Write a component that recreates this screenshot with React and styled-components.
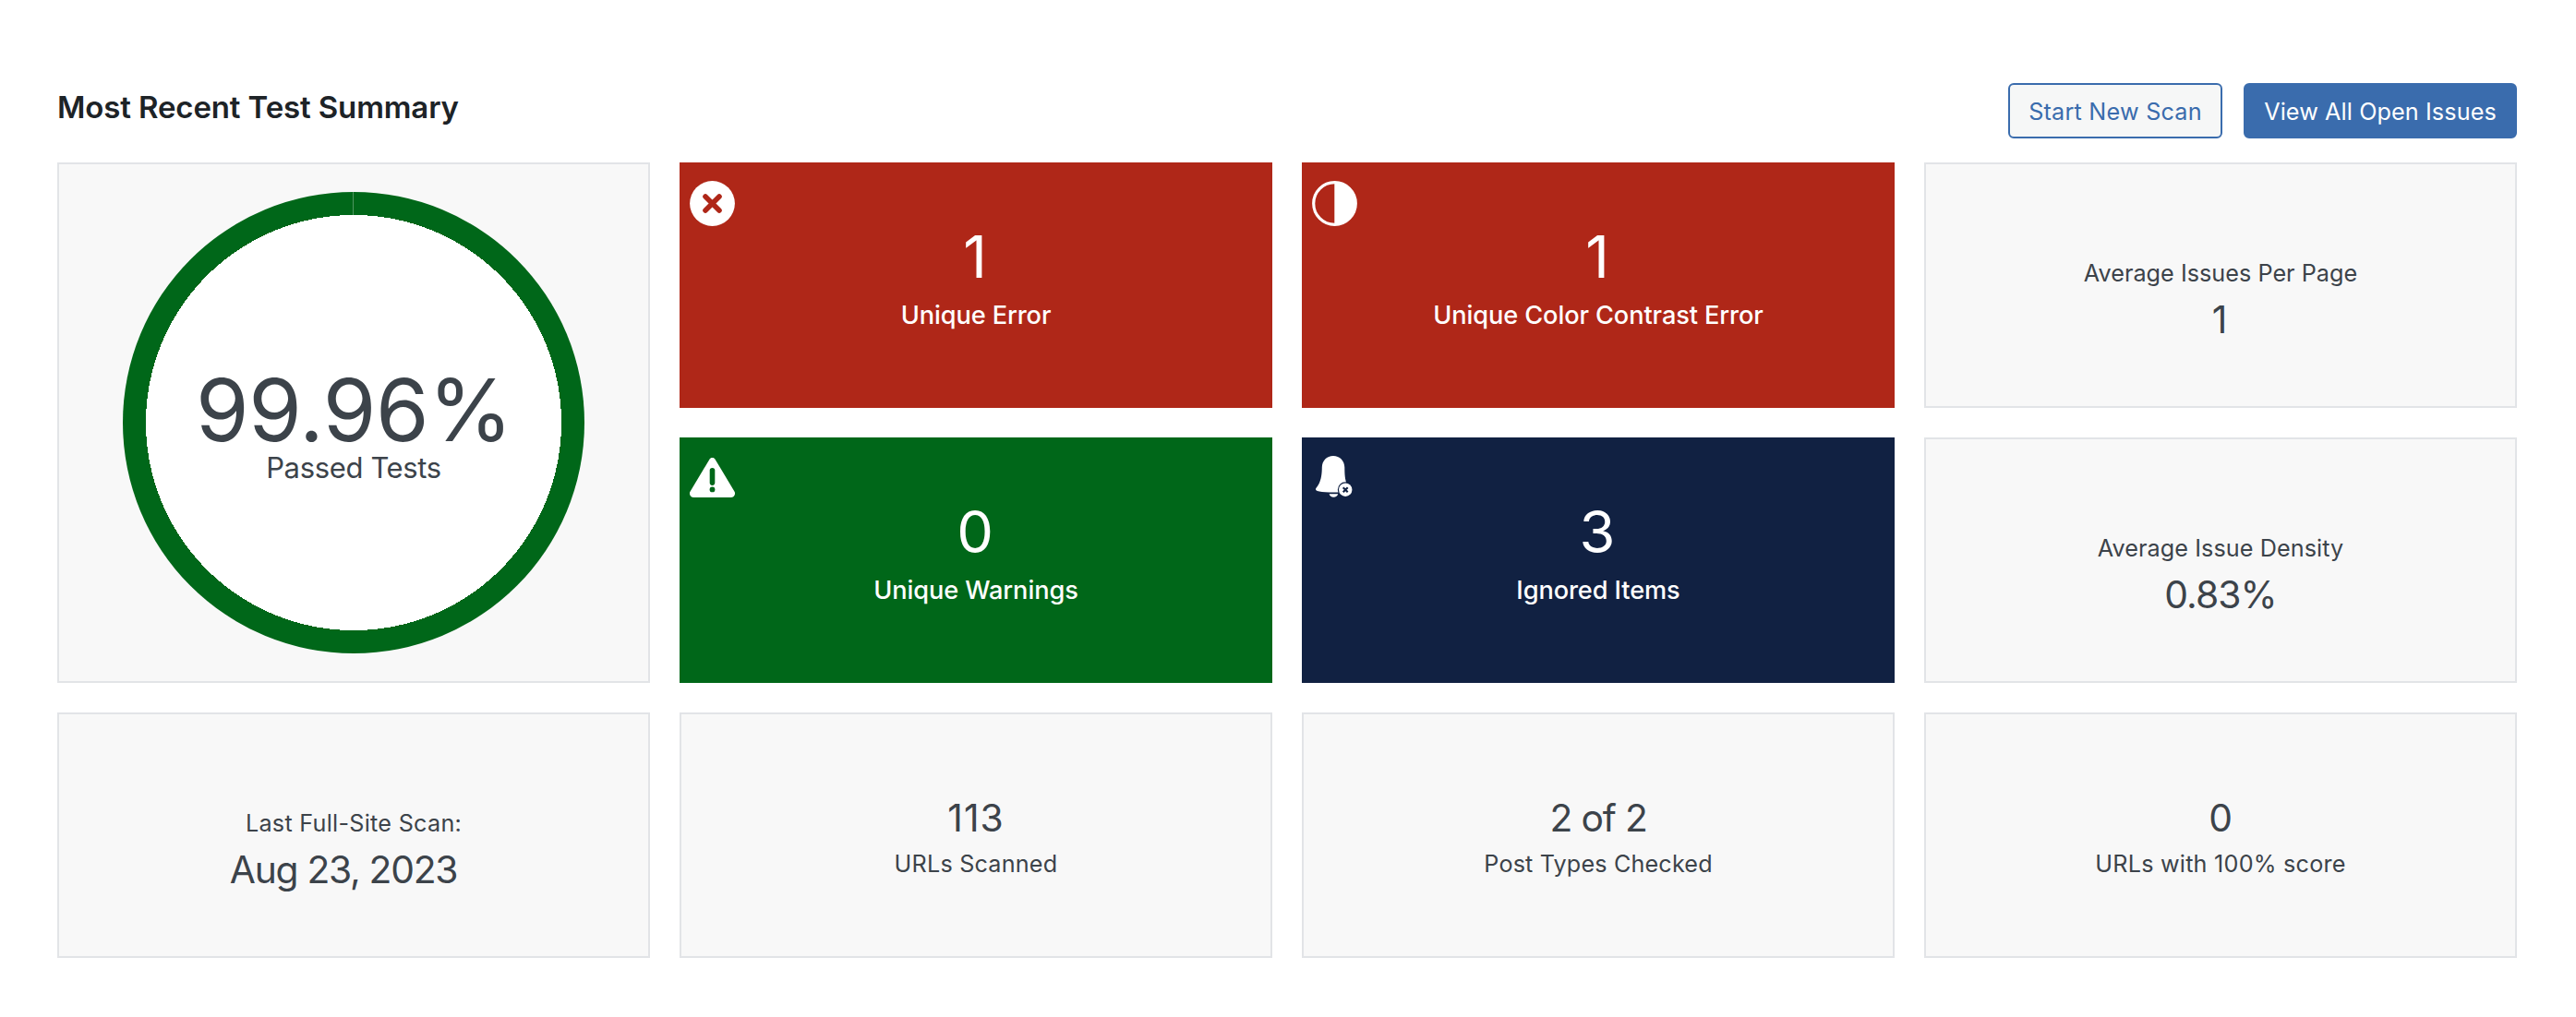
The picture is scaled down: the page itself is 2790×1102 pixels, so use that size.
import React from 'react';
import styled, { createGlobalStyle } from 'styled-components';

const colors = {
  text: '#3c434a',
  heading: '#1d2327',
  blue: '#3a6cad',
  panel: '#f8f8f8',
  border: '#e2e4e7',
  red: '#af2718',
  green: '#006719',
  navy: '#112142',
};

const GlobalStyle = createGlobalStyle`
  *, *::before, *::after { box-sizing: border-box; }
  body {
    margin: 0;
    background: #fff;
    color: ${colors.text};
    font-family: Inter, "Liberation Sans", sans-serif;
    font-weight: 430;
  }
`;

const Page = styled.main`
  width: 2790px;
  height: 1102px;
  padding: 90px 64px 64px 62px;
`;

const Header = styled.header`
  display: flex;
  justify-content: space-between;
  height: 60px;
  margin-bottom: 26px;
`;

const Title = styled.h2`
  margin: 0;
  color: ${colors.heading};
  font-size: 33px;
  font-weight: 620;
  line-height: 52px;
  letter-spacing: -0.13px;
`;

const Actions = styled.div`
  display: flex;
  gap: 23px;
`;

const Button = styled.button`
  width: ${(p) => p.$width}px;
  height: 60px;
  padding: 1px 0 0;
  border: 2px solid ${colors.blue};
  border-radius: 6px;
  background: ${(p) => (p.$primary ? colors.blue : '#f6f7f7')};
  color: ${(p) => (p.$primary ? '#fff' : colors.blue)};
  font-family: inherit;
  font-size: 25.2px;
  font-weight: 430;
  letter-spacing: ${(p) => p.$tracking}px;
  white-space: nowrap;
`;

const Grid = styled.section`
  display: grid;
  grid-template-columns: repeat(4, 642px);
  grid-template-rows: repeat(3, 266px);
  gap: 32px;
`;

const Panel = styled.article`
  display: flex;
  flex-direction: column;
  align-items: center;
  border: 2px solid ${colors.border};
  background: ${colors.panel};
  white-space: nowrap;
`;

const ScorePanel = styled(Panel)`
  grid-row: span 2;
  padding-top: 30px;
`;

const Ring = styled.div`
  display: flex;
  flex-direction: column;
  align-items: center;
  width: 500px;
  height: 500px;
  padding-top: 196px;
  border-radius: 50%;
  background:
    radial-gradient(closest-side, #fff 90%, transparent 90%),
    conic-gradient(${colors.green} 99.96%, #4f9560 0);
`;

const Score = styled.div`
  padding-left: 1px;
  font-size: 93px;
  line-height: 80px;
  letter-spacing: -0.5px;
`;

const ScoreLabel = styled.div`
  font-size: 31px;
  line-height: 45px;
  letter-spacing: -0.35px;
`;

const StatusCard = styled(Panel)`
  position: relative;
  padding-top: 64px;
  border: 0;
  background: ${(p) => p.$color};
  color: #fff;
`;

const Badge = styled.div`
  position: absolute;
  top: ${(p) => p.$top}px;
  left: ${(p) => p.$left}px;
  line-height: 0;
`;

const Count = styled.div`
  padding-right: 2px;
  font-size: 63px;
  line-height: 77px;
`;

const StatusLabel = styled.div`
  font-size: 27.2px;
  font-weight: 490;
  line-height: 50px;
  letter-spacing: -0.1px;
`;

const StatPanel = styled(Panel)`
  padding-top: ${(p) => (p.$labelFirst ? 100 : 82)}px;
`;

const Value = styled.div`
  font-size: 40.8px;
  line-height: ${(p) => (p.$labelFirst ? 64 : 60)}px;
  letter-spacing: ${(p) => p.$tracking}px;
  padding-right: ${(p) => p.$trail || 0}px;
`;

const Label = styled.div`
  font-size: 25.2px;
  line-height: ${(p) => (p.$labelFirst ? 36 : 40)}px;
  letter-spacing: ${(p) => p.$tracking}px;
`;

const ErrorIcon = () => (
  <svg width="49" height="49" viewBox="0 0 49 49">
    <circle cx="24.5" cy="24.5" r="24.4" fill="#fff" />
    <path d="M17 17l15 15M32 17l-15 15" stroke={colors.red} strokeWidth="5.6" strokeLinecap="round" />
  </svg>
);

const ContrastIcon = () => (
  <svg width="49" height="49" viewBox="0 0 49 49">
    <circle cx="24.5" cy="24.5" r="22.8" fill="none" stroke="#fff" strokeWidth="3.2" />
    <path d="M24.3 1v47a23.5 23.5 0 0 0 0-47z" fill="#fff" />
  </svg>
);

const WarningIcon = () => (
  <svg width="49" height="43" viewBox="0 0 49 43">
    <path
      d="M27.7 1.9L48.4 36.4C50.2 39.4 48 43 44.6 43H4.4C1 43-1.2 39.4.6 36.4L21.3 1.9C22.8-.6 26.2-.6 27.7 1.9z"
      fill="#fff"
    />
    <path d="M24.5 13.7v13.4" stroke={colors.green} strokeWidth="5.6" strokeLinecap="round" />
    <circle cx="24.5" cy="34.4" r="2.9" fill={colors.green} />
  </svg>
);

const IgnoredIcon = () => (
  <svg width="40" height="45" viewBox="0 0 40 45">
    <path
      d="M19 0C26 0 31.3 5.3 31.3 12.5C31.3 22 32 27 34.5 32V39.6H25C10 39.4 0 39 0 36.2C0 33.8 6.8 31 6.8 12.5C6.8 5.3 12 0 19 0z"
      fill="#fff"
    />
    <path d="M14.6 41.3h9.6c-.6 2.2-2.4 3.4-4.8 3.4s-4.2-1.2-4.8-3.4z" fill="#fff" />
    <circle cx="32.2" cy="36.7" r="8.4" fill={colors.navy} />
    <circle cx="32.2" cy="36.7" r="7.2" fill="#fff" />
    <path d="M29.7 34.2l5 5M34.7 34.2l-5 5" stroke={colors.navy} strokeWidth="2.1" />
  </svg>
);

const Status = ({ color, icon, top, left, count, label }) => (
  <StatusCard $color={color}>
    <Badge $top={top} $left={left}>{icon}</Badge>
    <Count>{count}</Count>
    <StatusLabel>{label}</StatusLabel>
  </StatusCard>
);

const Stat = ({ value, label, labelFirst, valueTracking = 0, labelTracking = 0, trail }) => {
  const valueLine = (
    <Value $labelFirst={labelFirst} $tracking={valueTracking} $trail={trail}>{value}</Value>
  );
  const labelLine = <Label $labelFirst={labelFirst} $tracking={labelTracking}>{label}</Label>;
  return (
    <StatPanel $labelFirst={labelFirst}>
      {labelFirst ? labelLine : valueLine}
      {labelFirst ? valueLine : labelLine}
    </StatPanel>
  );
};

export default function App() {
  return (
    <>
      <GlobalStyle />
      <Page>
        <Header>
          <Title>Most Recent Test Summary</Title>
          <Actions>
            <Button $width={232} $tracking={0.22}>Start New Scan</Button>
            <Button $width={296} $tracking={0.1} $primary>View All Open Issues</Button>
          </Actions>
        </Header>
        <Grid>
          <ScorePanel>
            <Ring>
              <Score>99.96%</Score>
              <ScoreLabel>Passed Tests</ScoreLabel>
            </Ring>
          </ScorePanel>
          <Status color={colors.red} icon={<ErrorIcon />} top={20} left={10.7} count="1" label="Unique Error" />
          <Status color={colors.red} icon={<ContrastIcon />} top={20.3} left={10.7} count="1" label="Unique Color Contrast Error" />
          <Stat labelFirst label="Average Issues Per Page" value="1" labelTracking={0.03} trail={2} />
          <Status color={colors.green} icon={<WarningIcon />} top={21.7} left={10.7} count="0" label="Unique Warnings" />
          <Status color={colors.navy} icon={<IgnoredIcon />} top={20.3} left={15} count="3" label="Ignored Items" />
          <Stat labelFirst label="Average Issue Density" value="0.83%" labelTracking={0.08} valueTracking={-0.9} />
          <Stat labelFirst label="Last Full-Site Scan:" value="Aug 23, 2023" labelTracking={0.27} valueTracking={-1.3} trail={22} />
          <Stat value="113" label="URLs Scanned" valueTracking={1} labelTracking={0.2} />
          <Stat value="2 of 2" label="Post Types Checked" valueTracking={-1.18} labelTracking={0.15} />
          <Stat value="0" label="URLs with 100% score" labelTracking={0.23} />
        </Grid>
      </Page>
    </>
  );
}
